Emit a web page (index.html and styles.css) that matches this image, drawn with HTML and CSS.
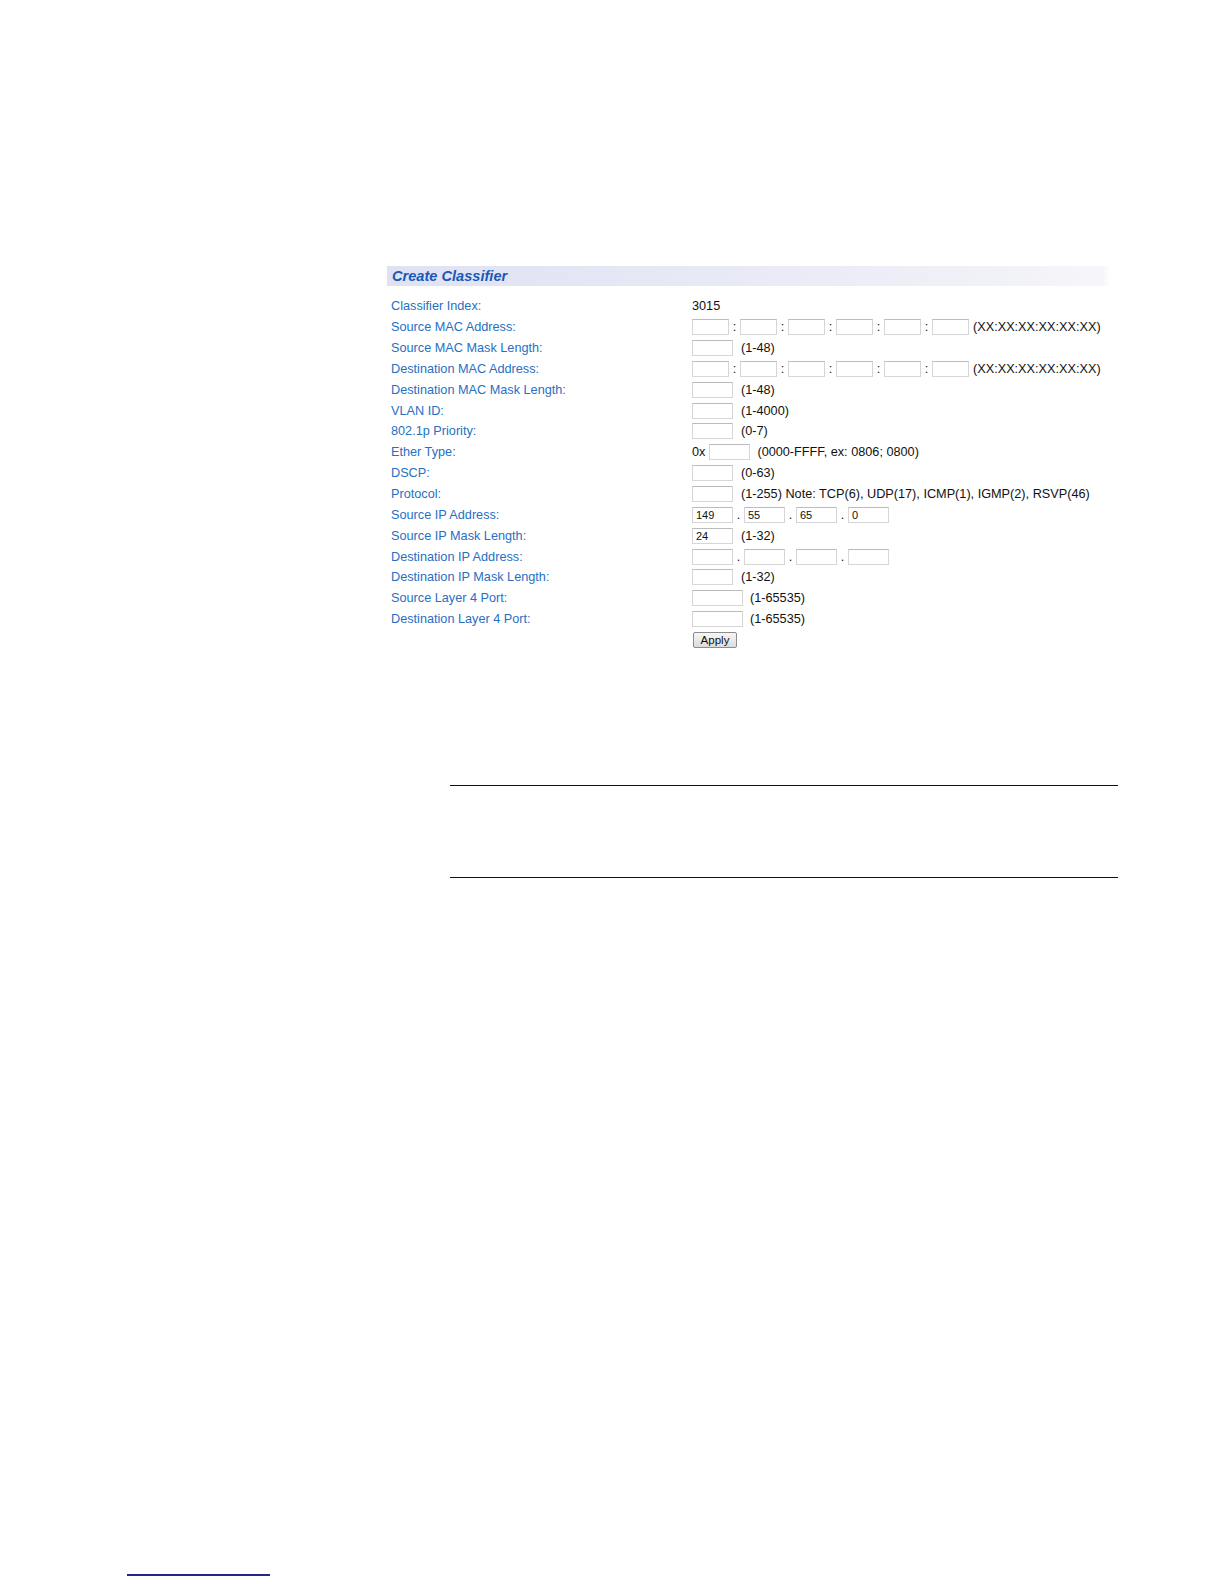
FILE: index.html
```html
<!DOCTYPE html>
<html>
<head>
<meta charset="utf-8">
<title>Create Classifier</title>
<link rel="stylesheet" href="styles.css">
</head>
<body>
<div class="page">
  <section class="panel">
    <div class="panel-header">Create Classifier</div>
    <div class="form">
      <div class="row"><span class="label">Classifier Index:</span><span class="value">3015</span></div>
      <div class="row"><span class="label">Source MAC Address:</span><span class="value"><input class="in mac" type="text"><span class="sep">:</span><input class="in mac" type="text"><span class="sep">:</span><input class="in mac" type="text"><span class="sep">:</span><input class="in mac" type="text"><span class="sep">:</span><input class="in mac" type="text"><span class="sep">:</span><input class="in mac" type="text"><span class="hint mac-hint">(XX:XX:XX:XX:XX:XX)</span></span></div>
      <div class="row"><span class="label">Source MAC Mask Length:</span><span class="value"><input class="in short" type="text"><span class="hint">(1-48)</span></span></div>
      <div class="row"><span class="label">Destination MAC Address:</span><span class="value"><input class="in mac" type="text"><span class="sep">:</span><input class="in mac" type="text"><span class="sep">:</span><input class="in mac" type="text"><span class="sep">:</span><input class="in mac" type="text"><span class="sep">:</span><input class="in mac" type="text"><span class="sep">:</span><input class="in mac" type="text"><span class="hint mac-hint">(XX:XX:XX:XX:XX:XX)</span></span></div>
      <div class="row"><span class="label">Destination MAC Mask Length:</span><span class="value"><input class="in short" type="text"><span class="hint">(1-48)</span></span></div>
      <div class="row"><span class="label">VLAN ID:</span><span class="value"><input class="in short" type="text"><span class="hint">(1-4000)</span></span></div>
      <div class="row"><span class="label">802.1p Priority:</span><span class="value"><input class="in short" type="text"><span class="hint">(0-7)</span></span></div>
      <div class="row"><span class="label">Ether Type:</span><span class="value"><span class="prefix">0x</span><input class="in short" type="text"><span class="hint port-hint">(0000-FFFF, ex: 0806; 0800)</span></span></div>
      <div class="row"><span class="label">DSCP:</span><span class="value"><input class="in short" type="text"><span class="hint">(0-63)</span></span></div>
      <div class="row"><span class="label">Protocol:</span><span class="value"><input class="in short" type="text"><span class="hint">(1-255) Note: TCP(6), UDP(17), ICMP(1), IGMP(2), RSVP(46)</span></span></div>
      <div class="row"><span class="label">Source IP Address:</span><span class="value"><input class="in short" type="text" value="149"><span class="sep">.</span><input class="in short" type="text" value="55"><span class="sep">.</span><input class="in short" type="text" value="65"><span class="sep">.</span><input class="in short" type="text" value="0"></span></div>
      <div class="row"><span class="label">Source IP Mask Length:</span><span class="value"><input class="in short" type="text" value="24"><span class="hint">(1-32)</span></span></div>
      <div class="row"><span class="label">Destination IP Address:</span><span class="value"><input class="in short" type="text"><span class="sep">.</span><input class="in short" type="text"><span class="sep">.</span><input class="in short" type="text"><span class="sep">.</span><input class="in short" type="text"></span></div>
      <div class="row"><span class="label">Destination IP Mask Length:</span><span class="value"><input class="in short" type="text"><span class="hint">(1-32)</span></span></div>
      <div class="row"><span class="label">Source Layer 4 Port:</span><span class="value"><input class="in port" type="text"><span class="hint port-hint">(1-65535)</span></span></div>
      <div class="row"><span class="label">Destination Layer 4 Port:</span><span class="value"><input class="in port" type="text"><span class="hint port-hint">(1-65535)</span></span></div>
      <div class="row"><span class="label"></span><span class="value"><button class="apply" type="button">Apply</button></span></div>
    </div>
  </section>
  <div class="note-box"></div>
  <div class="footer-line"></div>
</div>
</body>
</html>
```

FILE: styles.css
```css
html, body {
  margin: 0;
  padding: 0;
  background: #ffffff;
}

body {
  font-family: "Liberation Sans", Arial, sans-serif;
}

.page {
  width: 1224px;
  height: 1584px;
  padding-top: 266px;
  box-sizing: border-box;
  overflow: hidden;
}

.panel {
  margin-left: 387px;
  width: 723px;
}

.panel-header {
  height: 20px;
  line-height: 20px;
  padding-left: 5px;
  background: linear-gradient(to right, #e0e2f3 0%, #e8e9f6 45%, #f1f1f8 85%, #f6f6fa 99%, #ffffff 100%);
  color: #1a58b6;
  font-weight: bold;
  font-style: italic;
  font-size: 14.6px;
}

.form {
  margin-top: 10px;
  padding-left: 4px;
}

.row {
  display: grid;
  grid-template-columns: 301px 1fr;
  align-items: center;
  height: 20.85px;
  font-size: 12.7px;
}

.label {
  color: #2670c4;
  white-space: nowrap;
}

.value {
  display: flex;
  align-items: center;
  color: #111111;
  white-space: nowrap;
}

.in {
  box-sizing: border-box;
  height: 16px;
  margin: 0;
  padding: 0 3px;
  border: 1px solid #d6d6d6;
  border-top-color: #bcbcbc;
  background: #ffffff;
  font-family: "Liberation Sans", Arial, sans-serif;
  font-size: 11px;
  color: #111111;
  outline: none;
}

.mac {
  width: 37px;
}

.short {
  width: 41px;
}

.port {
  width: 51px;
}

.sep {
  display: inline-block;
  width: 11px;
  text-align: center;
}

.hint {
  margin-left: 8px;
}

.mac-hint {
  margin-left: 4px;
}

.port-hint {
  margin-left: 7px;
}

.prefix {
  margin-right: 4px;
}

.apply {
  box-sizing: border-box;
  width: 44px;
  height: 16px;
  margin: 0 0 0 1px;
  padding: 0;
  border: 1px solid #8c8c8c;
  border-radius: 2px;
  background: linear-gradient(#f6f6f6, #dcdcdc);
  font-family: "Liberation Sans", Arial, sans-serif;
  font-size: 11.5px;
  line-height: 14px;
  color: #111111;
}

.note-box {
  margin-top: 135px;
  margin-left: 450px;
  width: 668px;
  height: 91px;
  border-top: 1px solid #111111;
  border-bottom: 1px solid #111111;
}

.footer-line {
  margin-top: 696px;
  margin-left: 127px;
  width: 143px;
  height: 2px;
  background: #25258f;
}
```
